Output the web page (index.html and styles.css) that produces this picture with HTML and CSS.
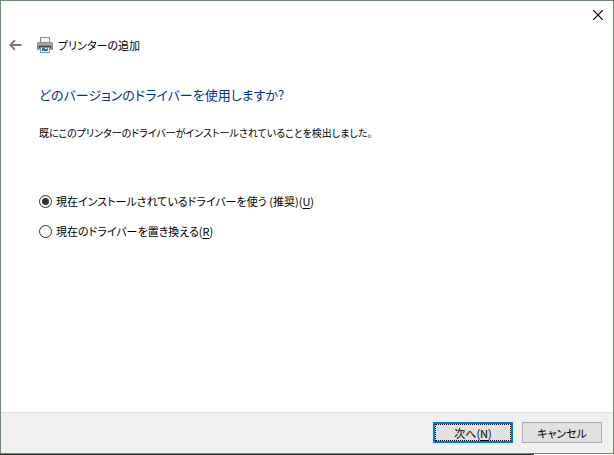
FILE: index.html
```html
<!DOCTYPE html>
<html lang="ja">
<head>
<meta charset="utf-8">
<meta name="viewport" content="width=device-width, initial-scale=1">
<title>プリンターの追加</title>
<link rel="stylesheet" href="styles.css">
</head>
<body>
<form class="dialog">
  <div class="titlebar">
    <button class="icon-button" type="button" aria-label="閉じる">
      <svg width="10" height="10" viewBox="0 0 10 10"><path d="M0 0L10 10M10 0L0 10" stroke="#000" stroke-width="1.2"/></svg>
    </button>
  </div>
  <header class="header">
    <button class="icon-button" type="button" aria-label="戻る">
      <svg width="13" height="12" viewBox="0 0 13 12" fill="none" stroke="#777" stroke-width="1.8"><path d="M1.5 6H12.5M6 1.2L1.2 6L6 10.8"/></svg>
    </button>
    <svg class="printer" width="16" height="16" viewBox="0 0 16 16">
      <path d="M3 0H13V6H3Z" fill="#8a8a8a"/>
      <path d="M4 1H12V5H4Z" fill="#f5f7f7"/>
      <path d="M1 5H15L16 6V13H0V6Z" fill="#85898c"/>
      <path d="M1 6H15V8H1Z" fill="#a7abad"/>
      <path d="M2 9H14V11H2Z" fill="#45494c"/>
      <path d="M0 12H16V13H0Z" fill="#a0a4a6"/>
      <path d="M3 10H13V16H3Z" fill="#8d9194"/>
      <path d="M4 11H12V15H4Z" fill="#f4f8fa"/>
      <path d="M5 11H8V14H5Z" fill="#1683c5"/>
      <path d="M8 12H10V14H8Z" fill="#245c95"/>
      <path d="M10 11H11V14H10Z" fill="#49a486"/>
    </svg>
    <span>プリンターの追加</span>
  </header>
  <main class="content">
    <h1>どのバージョンのドライバーを使用しますか?</h1>
    <p>既にこのプリンターのドライバーがインストールされていることを検出しました。</p>
    <div class="options" role="radiogroup" aria-label="ドライバーの選択">
      <div class="option"><input type="radio" id="use" name="driver" checked><label for="use">現在インストールされているドライバーを使う (推奨)(<u>U</u>)</label></div>
      <div class="option"><input type="radio" id="replace" name="driver"><label for="replace">現在のドライバーを置き換える(<u>R</u>)</label></div>
    </div>
  </main>
  <footer class="footer">
    <button class="button button-primary" type="button"><span>次へ(<u>N</u>)</span></button>
    <button class="button" type="button"><span>キャンセル</span></button>
  </footer>
</form>
<div class="edge"></div>
</body>
</html>
```
FILE: styles.css
```css
* { box-sizing: border-box; }

body {
  display: flex;
  flex-direction: column;
  min-height: 100vh;
  margin: 0;
  background: #fff;
  color: #000;
  font: 11px/18px "Noto Sans CJK JP", sans-serif;
  font-feature-settings: "palt";
}

button, input { margin: 0; font: inherit; color: inherit; font-feature-settings: inherit; }
svg { display: block; }
u { text-underline-offset: 2px; }

.dialog {
  flex: 1;
  display: flex;
  flex-direction: column;
  border: 1px solid #6f876f;
}

.titlebar {
  display: flex;
  justify-content: flex-end;
  padding: 9px 10px;
}

.icon-button {
  padding: 0;
  border: 0;
  background: none;
}

.header {
  display: flex;
  align-items: center;
  padding: 7px 8px;
}

.printer { margin: 0 5px 0 15px; }

.content {
  flex: 1;
  padding: 22px 38px;
}

h1 {
  margin: 0 0 17px;
  color: #003399;
  font-size: 13px;
  font-weight: 400;
  line-height: 24px;
}

p {
  margin: 0 0 50px;
  font-size: 10px;
}

.options { display: grid; gap: 12px; }

.option {
  display: flex;
  align-items: center;
  gap: 4px;
}

.option input {
  appearance: none;
  width: 13px;
  height: 13px;
  border: 1px solid #333;
  border-radius: 50%;
  background: #fff;
}

.option input:checked {
  background: radial-gradient(circle, #333 3px, #fff 4px);
}

.footer {
  display: flex;
  justify-content: flex-end;
  gap: 9px;
  padding: 9px 11px 10px;
  border-top: 1px solid #dfdfdf;
  background: #f0f0f0;
}

.button {
  width: 80px;
  height: 21px;
  padding: 0;
  border: 1px solid #adadad;
  background: #e1e1e1;
  line-height: 18px;
}

.button-primary {
  border: 2px solid #0078d7;
  outline: 1px dotted #000;
  outline-offset: -3px;
  line-height: 16px;
}

.edge {
  width: 87%;
  height: 1px;
  background: #293029;
}
```
